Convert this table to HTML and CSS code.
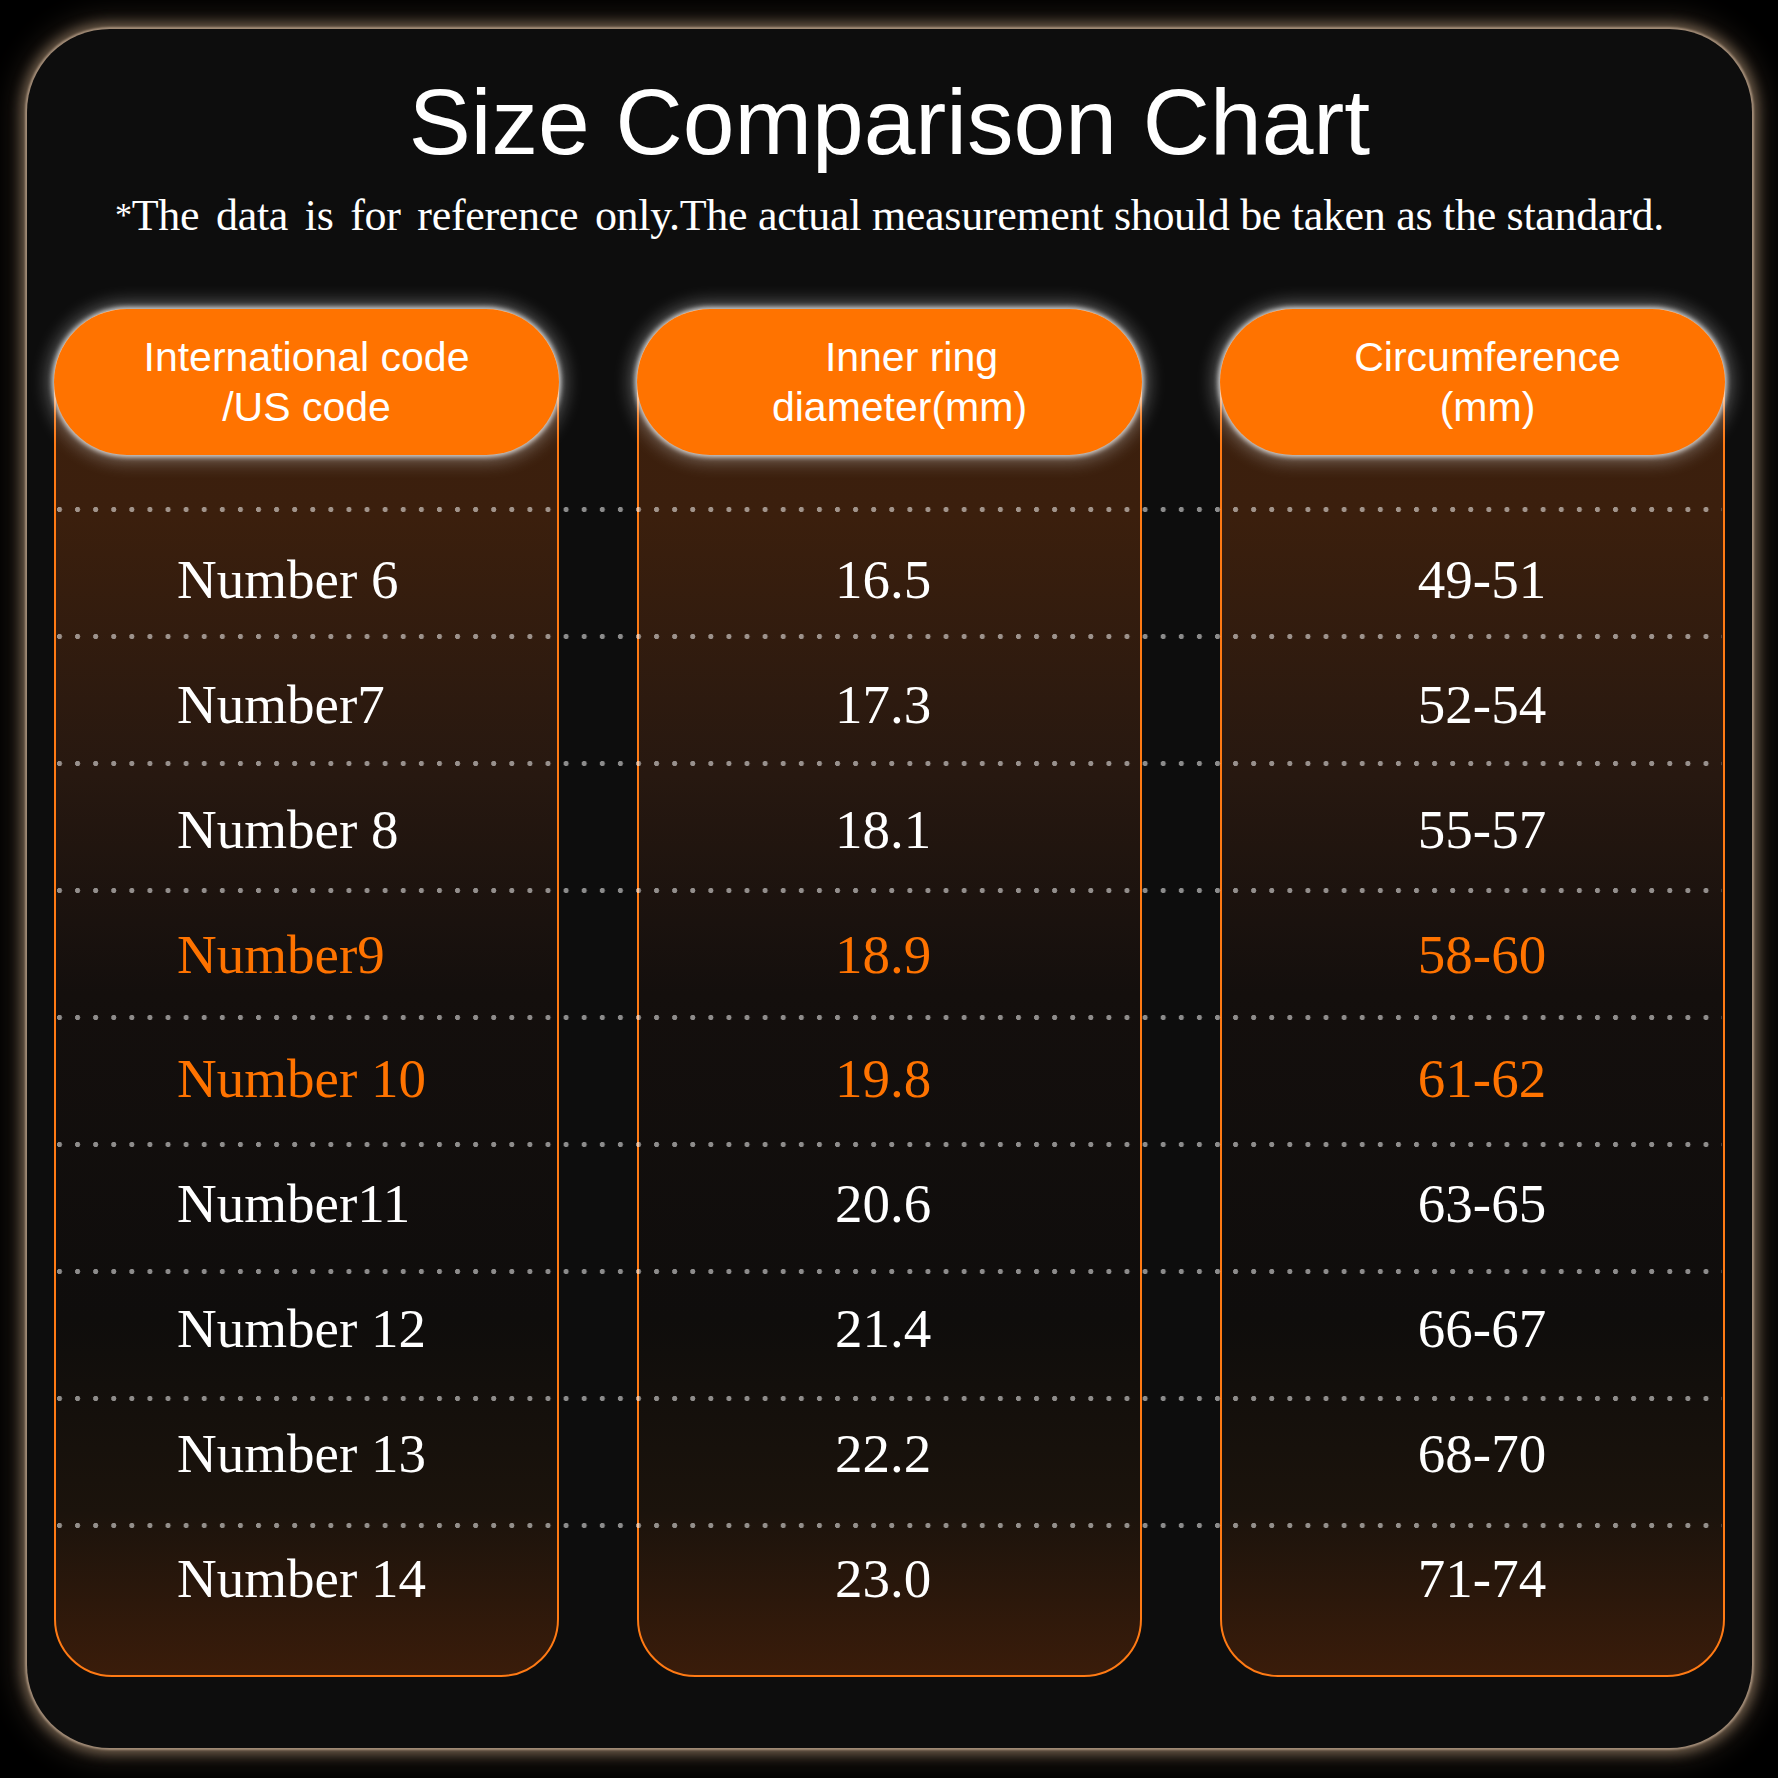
FILE: index.html
```html
<!DOCTYPE html>
<html lang="en">
<head>
<meta charset="utf-8">
<title>Size Comparison Chart</title>
<link rel="stylesheet" href="styles.css">
</head>
<body>
<div class="page">
  <div class="card">
    <h1 class="title">Size Comparison Chart</h1>
    <p class="note"><span class="note-wide"><span class="star">*</span>The data is for reference only.</span>The actual measurement should be taken as the standard.</p>
    <div class="table">
      <div class="col c1"><div class="pill"><div class="pill-text">International code<br>/US code</div></div></div>
      <div class="col c2"><div class="pill pill-2"><div class="pill-text"><span class="pill-l1">Inner ring</span><br>diameter(mm)</div></div></div>
      <div class="col c3"><div class="pill pill-3"><div class="pill-text">Circumference<br>(mm)</div></div></div>

      <div class="dots r1"></div>
      <div class="dots r2"></div>
      <div class="dots r3"></div>
      <div class="dots r4"></div>
      <div class="dots r5"></div>
      <div class="dots r6"></div>
      <div class="dots r7"></div>
      <div class="dots r8"></div>
      <div class="dots r9"></div>

      <div class="cell name c1 r1">Number 6</div>
      <div class="cell dia c2 r1">16.5</div>
      <div class="cell circ c3 r1">49-51</div>

      <div class="cell name c1 r2">Number7</div>
      <div class="cell dia c2 r2">17.3</div>
      <div class="cell circ c3 r2">52-54</div>

      <div class="cell name c1 r3">Number 8</div>
      <div class="cell dia c2 r3">18.1</div>
      <div class="cell circ c3 r3">55-57</div>

      <div class="cell name c1 r4 hot">Number9</div>
      <div class="cell dia c2 r4 hot">18.9</div>
      <div class="cell circ c3 r4 hot">58-60</div>

      <div class="cell name c1 r5 hot">Number 10</div>
      <div class="cell dia c2 r5 hot">19.8</div>
      <div class="cell circ c3 r5 hot">61-62</div>

      <div class="cell name c1 r6">Number11</div>
      <div class="cell dia c2 r6">20.6</div>
      <div class="cell circ c3 r6">63-65</div>

      <div class="cell name c1 r7">Number 12</div>
      <div class="cell dia c2 r7">21.4</div>
      <div class="cell circ c3 r7">66-67</div>

      <div class="cell name c1 r8">Number 13</div>
      <div class="cell dia c2 r8">22.2</div>
      <div class="cell circ c3 r8">68-70</div>

      <div class="cell name c1 r9">Number 14</div>
      <div class="cell dia c2 r9">23.0</div>
      <div class="cell circ c3 r9">71-74</div>
    </div>
  </div>
</div>
</body>
</html>
```

FILE: styles.css
```css
html, body {
  margin: 0;
  padding: 0;
  background: #000;
}

.page {
  width: 1778px;
  height: 1778px;
  padding: 29px 0 0 27px;
  box-sizing: border-box;
  background: #000;
}

.card {
  width: 1725px;
  height: 1719px;
  box-sizing: border-box;
  border-radius: 83px;
  background: #0d0d0d;
  box-shadow: 0 0 2px 2px #a38d78, 0 0 12px 6px rgba(140, 118, 95, 0.72), 0 0 30px 10px rgba(110, 90, 70, 0.4);
  padding: 47px 27px 0;
  color: #fff;
}

.title {
  margin: 0;
  font-family: "Liberation Sans", Arial, sans-serif;
  font-weight: normal;
  font-size: 93px;
  line-height: 93px;
  text-align: center;
  color: #fff;
}

.note {
  margin: 21px 0 0;
  font-family: "Liberation Serif", "Times New Roman", serif;
  font-size: 44px;
  line-height: 50px;
  letter-spacing: -0.3px;
  text-align: center;
  color: #fff;
  white-space: nowrap;
}

.note-wide {
  word-spacing: 6px;
}

.star {
  font-size: 34px;
  vertical-align: 4px;
}

.table {
  margin-top: 68px;
  display: grid;
  grid-template-columns: 505px 78px 505px 78px 505px;
  grid-template-rows: 146px 54px repeat(9, 127px) 25px;
}

.col {
  grid-row: 1 / -1;
  display: flex;
  flex-direction: column;
  border: 2px solid #ff7a14;
  border-radius: 73px 73px 58px 58px;
  background: linear-gradient(to bottom,
    #3d200d 0%,
    #3b1f0d 15%,
    #271810 34%,
    #140f0d 50%,
    #0f0d0c 74%,
    #1b130c 88%,
    #3a1c0a 100%);
}

.c1 { grid-column: 1; }
.c2 { grid-column: 3; }
.c3 { grid-column: 5; }

.pill {
  height: 146px;
  margin: -2px -2px 0;
  border-radius: 73px;
  background: #ff7300;
  box-shadow: 0 0 5px 2px rgba(245, 245, 245, 0.8), 0 0 18px 6px rgba(215, 215, 215, 0.42);
  display: flex;
  align-items: center;
  justify-content: center;
  font-family: "Liberation Sans", Arial, sans-serif;
  font-size: 41px;
  line-height: 50px;
  color: #fff;
}

.pill-text {
  text-align: center;
}

.pill-2 { padding-left: 20px; }
.pill-l1 { margin-left: 24px; }
.pill-3 { padding-left: 30px; }

.dots {
  grid-column: 1 / -1;
  align-self: start;
  height: 5px;
  margin: -2.5px 3px 0;
  background-image: radial-gradient(circle at 2.5px 2.5px, rgba(255, 255, 255, 0.52) 2.4px, rgba(255, 255, 255, 0) 2.9px);
  background-size: 18.1px 5px;
  background-repeat: repeat-x;
}

.r1 { grid-row: 3; --dy: 7.5px; }
.r2 { grid-row: 4; --dy: 5.4px; }
.r3 { grid-row: 5; --dy: 3.2px; }
.r4 { grid-row: 6; --dy: 1px; }
.r5 { grid-row: 7; --dy: -1.1px; }
.r6 { grid-row: 8; --dy: -3.3px; }
.r7 { grid-row: 9; --dy: -5.4px; }
.r8 { grid-row: 10; --dy: -7.6px; }
.r9 { grid-row: 11; --dy: -9.7px; }

.cell {
  display: flex;
  align-items: center;
  font-family: "Liberation Serif", "Times New Roman", serif;
  font-size: 55px;
  line-height: 60px;
  color: #fff;
  padding-top: max(0px, calc(var(--dy) * 2));
  padding-bottom: max(0px, calc(var(--dy) * -2));
}

.cell.name {
  padding-left: 123px;
}

.cell.dia {
  justify-content: center;
  padding-right: 13px;
}

.cell.circ {
  justify-content: center;
  padding-left: 19px;
}

.cell.hot {
  color: #ff7300;
}
```
